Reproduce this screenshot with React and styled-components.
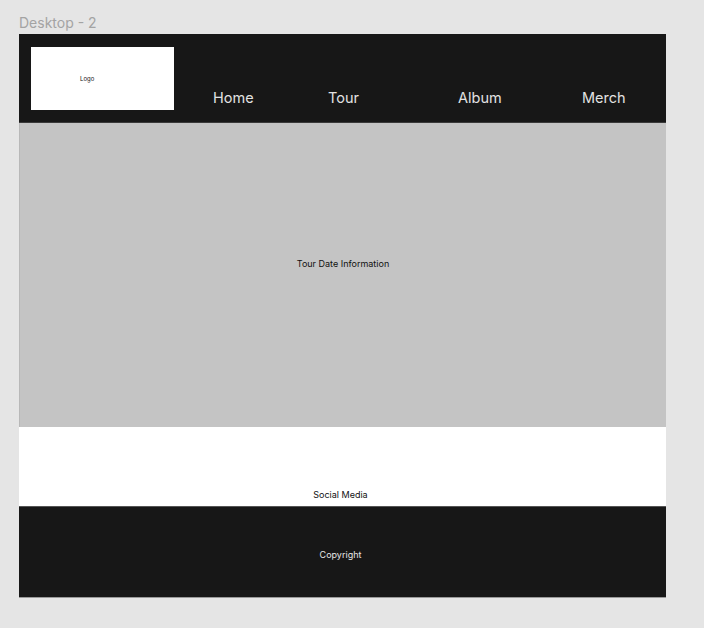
import React from 'react';
import styled, { createGlobalStyle } from 'styled-components';

const GlobalStyle = createGlobalStyle`
	html, body {
		margin: 0;
		padding: 0;
		background: #e5e5e5;
		font-family: Inter, "Liberation Sans", sans-serif;
	}
`;

const Canvas = styled.div`
	width: 704px;
	height: 628px;
	padding: 14px 0 0 19px;
	box-sizing: border-box;
	background: #e5e5e5;
`;

const FrameLabel = styled.div`
	height: 20px;
	font-size: 14px;
	line-height: 18px;
	color: #a3a3a3;
`;

const Frame = styled.div`
	display: flex;
	flex-direction: column;
	width: 647px;
	height: 563px;
	background: #ffffff;
`;

const Header = styled.header`
	display: grid;
	grid-template-columns: 182px 115px 130px 124px auto;
	grid-template-rows: 1fr;
	align-items: end;
	height: 89px;
	box-sizing: border-box;
	padding: 0 0 0 12px;
	background: #171717;
	border-bottom: 1px solid #3a3a3a;
`;

const Logo = styled.div`
	align-self: start;
	display: flex;
	align-items: center;
	margin-top: 13px;
	width: 143px;
	height: 63px;
	padding-left: 49px;
	box-sizing: border-box;
	background: #ffffff;
	font-size: 6px;
	color: #111;
`;

const NavLink = styled.a`
	margin-bottom: 15px;
	font-size: 14.5px;
	line-height: 18px;
	font-weight: 400;
	color: #e2e2e2;
	text-decoration: none;
`;

const Hero = styled.section`
	display: flex;
	align-items: center;
	justify-content: center;
	height: 304px;
	padding-bottom: 22px;
	box-sizing: border-box;
	background: #c4c4c4;
	border-left: 1px solid #b8b8b8;
`;

const SmallText = styled.span`
	font-size: 9px;
	line-height: 12px;
	color: ${(p) => p.light ? '#e6e6e6' : '#111111'};
`;

const Social = styled.section`
	display: flex;
	align-items: flex-end;
	justify-content: center;
	height: 79px;
	padding: 0 4px 5px 0;
	box-sizing: border-box;
	background: #ffffff;
`;

const Footer = styled.footer`
	display: flex;
	align-items: center;
	justify-content: center;
	flex: 1;
	padding: 6px 4px 0 0;
	background: #171717;
	border-top: 1px solid #555;
	box-shadow: 0 1px 0 #9a9a9a;
`;

const links = ['Home', 'Tour', 'Album', 'Merch'];

export default function App() {
	return (
		<>
			<GlobalStyle />
			<Canvas>
				<FrameLabel>Desktop - 2</FrameLabel>
				<Frame>
					<Header>
						<Logo>Logo</Logo>
						{links.map((l) => (
							<NavLink key={l} href="#">{l}</NavLink>
						))}
					</Header>
					<Hero>
						<SmallText>Tour Date Information</SmallText>
					</Hero>
					<Social>
						<SmallText>Social Media</SmallText>
					</Social>
					<Footer>
						<SmallText light>Copyright</SmallText>
					</Footer>
				</Frame>
			</Canvas>
		</>
	);
}
